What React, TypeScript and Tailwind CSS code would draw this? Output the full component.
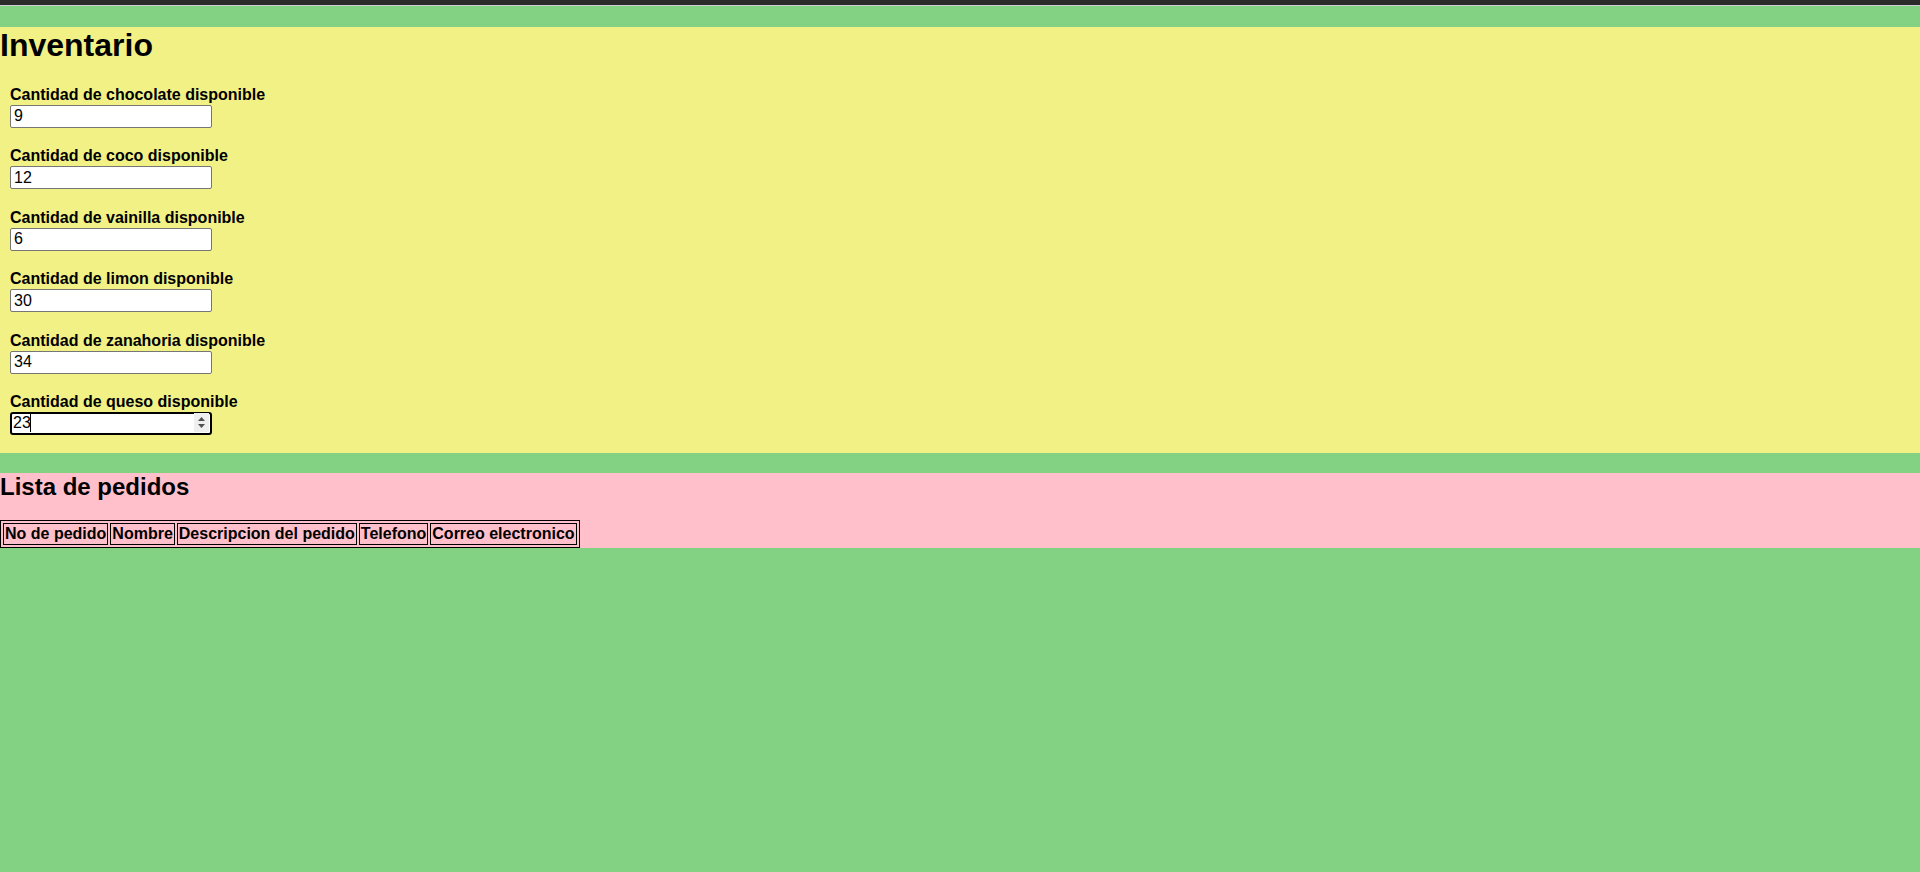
const sabores = [
  { nombre: "chocolate", cantidad: "9" },
  { nombre: "coco", cantidad: "12" },
  { nombre: "vainilla", cantidad: "6" },
  { nombre: "limon", cantidad: "30" },
  { nombre: "zanahoria", cantidad: "34" },
  { nombre: "queso", cantidad: "23" }
];

const columnas = ["No de pedido", "Nombre", "Descripcion del pedido", "Telefono", "Correo electronico"];

function Spinner() {
  return (
    <span className="pointer-events-none absolute right-[3px] top-[2px] flex h-[19px] w-[15px] flex-col items-center justify-center gap-[3px] bg-[#efefef]">
      <svg width="7" height="4" viewBox="0 0 7 4" aria-hidden="true">
        <path d="M3.5 0 L7 4 L0 4 Z" fill="#505050" />
      </svg>
      <svg width="7" height="4" viewBox="0 0 7 4" aria-hidden="true">
        <path d="M0 0 L7 0 L3.5 4 Z" fill="#505050" />
      </svg>
    </span>
  );
}

export default function App() {
  return (
    <div className="min-h-screen bg-[#83d283] font-['Liberation_Sans',Arial,sans-serif] text-black">
      <div className="h-[6px] border-b border-[#cfcfcf] bg-[#2b2b2b]" />
      <div className="h-[21px]" />

      <section className="bg-[#f2f186] pb-[18.5px]">
        <h1 className="mb-[22px] text-[32px] font-bold leading-[37px]">Inventario</h1>
        <div className="flex flex-col gap-[20px] px-[10px]">
          {sabores.map((s, i) => {
            const ultimo = i === sabores.length - 1;
            return (
              <div key={s.nombre} className="flex flex-col">
                <label className="text-base font-bold leading-[18.4px]">
                  Cantidad de {s.nombre} disponible
                </label>
                <div className="relative h-[23px] w-[202px]">
                  <input
                    type="text"
                    defaultValue={s.cantidad}
                    readOnly
                    className={
                      ultimo
                        ? "h-full w-full rounded-[3px] border-2 border-black bg-white px-[1px] text-base leading-[19px] outline-none"
                        : "h-full w-full rounded-[2px] border border-[#767676] bg-white px-[3px] text-base leading-[19px] outline-none"
                    }
                  />
                  {ultimo && (
                    <>
                      <span className="pointer-events-none absolute left-[20px] top-[3px] h-[18px] w-px bg-black" />
                      <Spinner />
                    </>
                  )}
                </div>
              </div>
            );
          })}
        </div>
      </section>

      <div className="h-[20px]" />

      <section className="bg-[#ffc0cb]">
        <h2 className="mb-[19px] text-2xl font-bold leading-[28px]">Lista de pedidos</h2>
        <table className="border-separate border-spacing-[2px] border border-black">
          <thead>
            <tr>
              {columnas.map((c) => (
                <th key={c} className="border border-black p-px text-base font-bold leading-[18.4px]">
                  {c}
                </th>
              ))}
            </tr>
          </thead>
        </table>
      </section>
    </div>
  );
}
